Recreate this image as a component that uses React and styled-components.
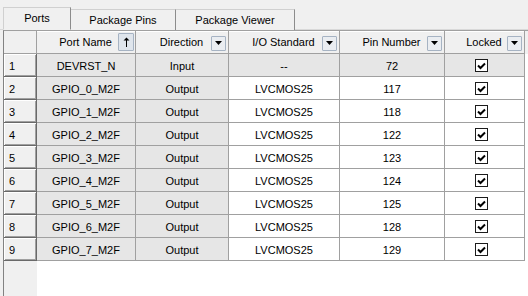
import React from 'react';
import styled, { createGlobalStyle } from 'styled-components';

const GlobalStyle = createGlobalStyle`
  html, body {
    margin: 0;
    padding: 0;
    background: #f0f0f0;
  }
  body {
    font-family: "Liberation Sans", Arial, sans-serif;
    font-size: 11px;
    color: #000;
  }
`;

const Window = styled.div`
  width: 528px;
  height: 296px;
  overflow: hidden;
  display: flex;
  flex-direction: column;
  background: #f0f0f0;
`;

// Tabs
const TabStrip = styled.div`
  display: flex;
  align-items: flex-end;
  height: 30px;
  padding-left: 3px;
  box-sizing: border-box;
  border-bottom: 1px solid #d9d9d9;
`;

const Tab = styled.div`
  box-sizing: border-box;
  width: ${(p) => p.$w}px;
  height: ${(p) => (p.$active ? 23 : 21)}px;
  margin-bottom: -1px;
  display: flex;
  align-items: center;
  justify-content: center;
  padding-bottom: ${(p) => (p.$active ? 2 : 0)}px;
  background: #f0f0f0;
  border-top: 1px solid #d0d0d0;
  border-left: ${(p) => (p.$first ? '1px solid #d0d0d0' : 'none')};
  border-right: 1px solid #8c8c8c;
  border-bottom: ${(p) => (p.$active ? '1px solid #f0f0f0' : 'none')};
  position: relative;
`;

// Grid
const Frame = styled.div`
  flex: 1;
  margin-left: 3px;
  border-top: 1px solid #a0a0a0;
  border-left: 1px solid #828282;
  display: flex;
  flex-direction: column;
  background: #fff;
`;

const COLS = '33px 99px 93px 111px 105px 80px 1fr';

const Row = styled.div`
  display: grid;
  grid-template-columns: ${COLS};
  height: ${(p) => p.$h}px;
`;

const HeadCorner = styled.div`
  background: #f0f0f0;
  border-right: 1px solid #a0a0a0;
  border-bottom: 1px solid #a0a0a0;
`;

const HeadCell = styled.div`
  box-sizing: border-box;
  background: #f0f0f0;
  border-right: 1px solid #a0a0a0;
  border-bottom: 1px solid #a0a0a0;
  box-shadow: inset 0 1px 0 #fff;
  display: grid;
  grid-template-columns: 16px 1fr 16px;
  align-items: center;
  padding-right: 1px;
`;

const HeadLabel = styled.span`
  grid-column: 2;
  text-align: center;
  white-space: nowrap;
`;

const HeadButton = styled.div`
  grid-column: 3;
  box-sizing: border-box;
  width: ${(p) => (p.$sort ? 16 : 15)}px;
  height: ${(p) => (p.$sort ? 18 : 15)}px;
  align-self: ${(p) => (p.$sort ? 'start' : 'center')};
  margin-top: ${(p) => (p.$sort ? 2 : 2)}px;
  border: 1px solid #a6b3c3;
  border-radius: 1px;
  background: ${(p) => (p.$sort ? '#dfe5ec' : '#eaedf1')};
  display: flex;
  align-items: center;
  justify-content: center;
`;

const RowHeader = styled.div`
  box-sizing: border-box;
  background: #f0f0f0;
  border-right: 1px solid #696969;
  border-bottom: 1px solid #696969;
  box-shadow: inset 1px 1px 0 #fff, inset -1px -1px 0 #a0a0a0;
  display: flex;
  align-items: center;
  padding-left: 5px;
  padding-top: 1px;
`;

const Cell = styled.div`
  box-sizing: border-box;
  background: ${(p) => (p.$grey ? '#e6e6e6' : '#fff')};
  border-right: 1px solid #a0a0a0;
  border-bottom: 1px solid #a0a0a0;
  display: flex;
  align-items: center;
  justify-content: center;
  white-space: nowrap;
  padding-top: 1px;
`;

const Spare = styled.div`
  background: ${(p) => (p.$head ? '#f0f0f0' : '#fff')};
`;

const Filler = styled.div`
  flex: 1;
  display: grid;
  grid-template-columns: 33px 1fr;
`;

const FillerLeft = styled.div`
  background: #f0f0f0;
`;

const FillerRight = styled.div`
  background: #fff;
`;

const Check = styled.div`
  box-sizing: border-box;
  width: 13px;
  height: 13px;
  border: 1px solid #1c1c1c;
  background: #fff;
  display: flex;
  align-items: center;
  justify-content: center;
  margin-left: -6px;
`;

const DownArrow = () => (
  <svg width="7" height="4" viewBox="0 0 7 4">
    <path d="M0 0H7L3.5 4Z" fill="#000" />
  </svg>
);

const UpArrow = () => (
  <svg width="7" height="10" viewBox="0 0 7 10">
    <path d="M3.5 0.5L0.5 3.5H3V10H4V3.5H6.5Z" fill="#000" />
  </svg>
);

const Tick = () => (
  <svg width="9" height="8" viewBox="0 0 9 8">
    <path d="M1 3.5L3.5 6L8 1.5" stroke="#000" strokeWidth="2" fill="none" />
  </svg>
);

const ports = [
  { name: 'DEVRST_N', dir: 'Input', io: '--', pin: 72 },
  { name: 'GPIO_0_M2F', dir: 'Output', io: 'LVCMOS25', pin: 117 },
  { name: 'GPIO_1_M2F', dir: 'Output', io: 'LVCMOS25', pin: 118 },
  { name: 'GPIO_2_M2F', dir: 'Output', io: 'LVCMOS25', pin: 122 },
  { name: 'GPIO_3_M2F', dir: 'Output', io: 'LVCMOS25', pin: 123 },
  { name: 'GPIO_4_M2F', dir: 'Output', io: 'LVCMOS25', pin: 124 },
  { name: 'GPIO_5_M2F', dir: 'Output', io: 'LVCMOS25', pin: 125 },
  { name: 'GPIO_6_M2F', dir: 'Output', io: 'LVCMOS25', pin: 128 },
  { name: 'GPIO_7_M2F', dir: 'Output', io: 'LVCMOS25', pin: 129 },
];

const columns = [
  { label: 'Port Name', sort: true },
  { label: 'Direction' },
  { label: 'I/O Standard' },
  { label: 'Pin Number' },
  { label: 'Locked' },
];

const App = () => (
  <Window>
    <GlobalStyle />
    <TabStrip>
      <Tab $w={68} $active $first>Ports</Tab>
      <Tab $w={105}>Package Pins</Tab>
      <Tab $w={119}>Package Viewer</Tab>
    </TabStrip>
    <Frame>
      <Row $h={23}>
        <HeadCorner />
        {columns.map((c) => (
          <HeadCell key={c.label}>
            <HeadLabel>{c.label}</HeadLabel>
            <HeadButton $sort={c.sort}>{c.sort ? <UpArrow /> : <DownArrow />}</HeadButton>
          </HeadCell>
        ))}
        <Spare $head />
      </Row>
      {ports.map((p, i) => {
        const first = i === 0;
        return (
          <Row $h={23} key={p.name}>
            <RowHeader>{i + 1}</RowHeader>
            <Cell $grey>{p.name}</Cell>
            <Cell $grey>{p.dir}</Cell>
            <Cell $grey={first}>{p.io}</Cell>
            <Cell $grey={first}>{p.pin}</Cell>
            <Cell $grey={first}>
              <Check>
                <Tick />
              </Check>
            </Cell>
            <Spare />
          </Row>
        );
      })}
      <Filler>
        <FillerLeft />
        <FillerRight />
      </Filler>
    </Frame>
  </Window>
);

export default App;
